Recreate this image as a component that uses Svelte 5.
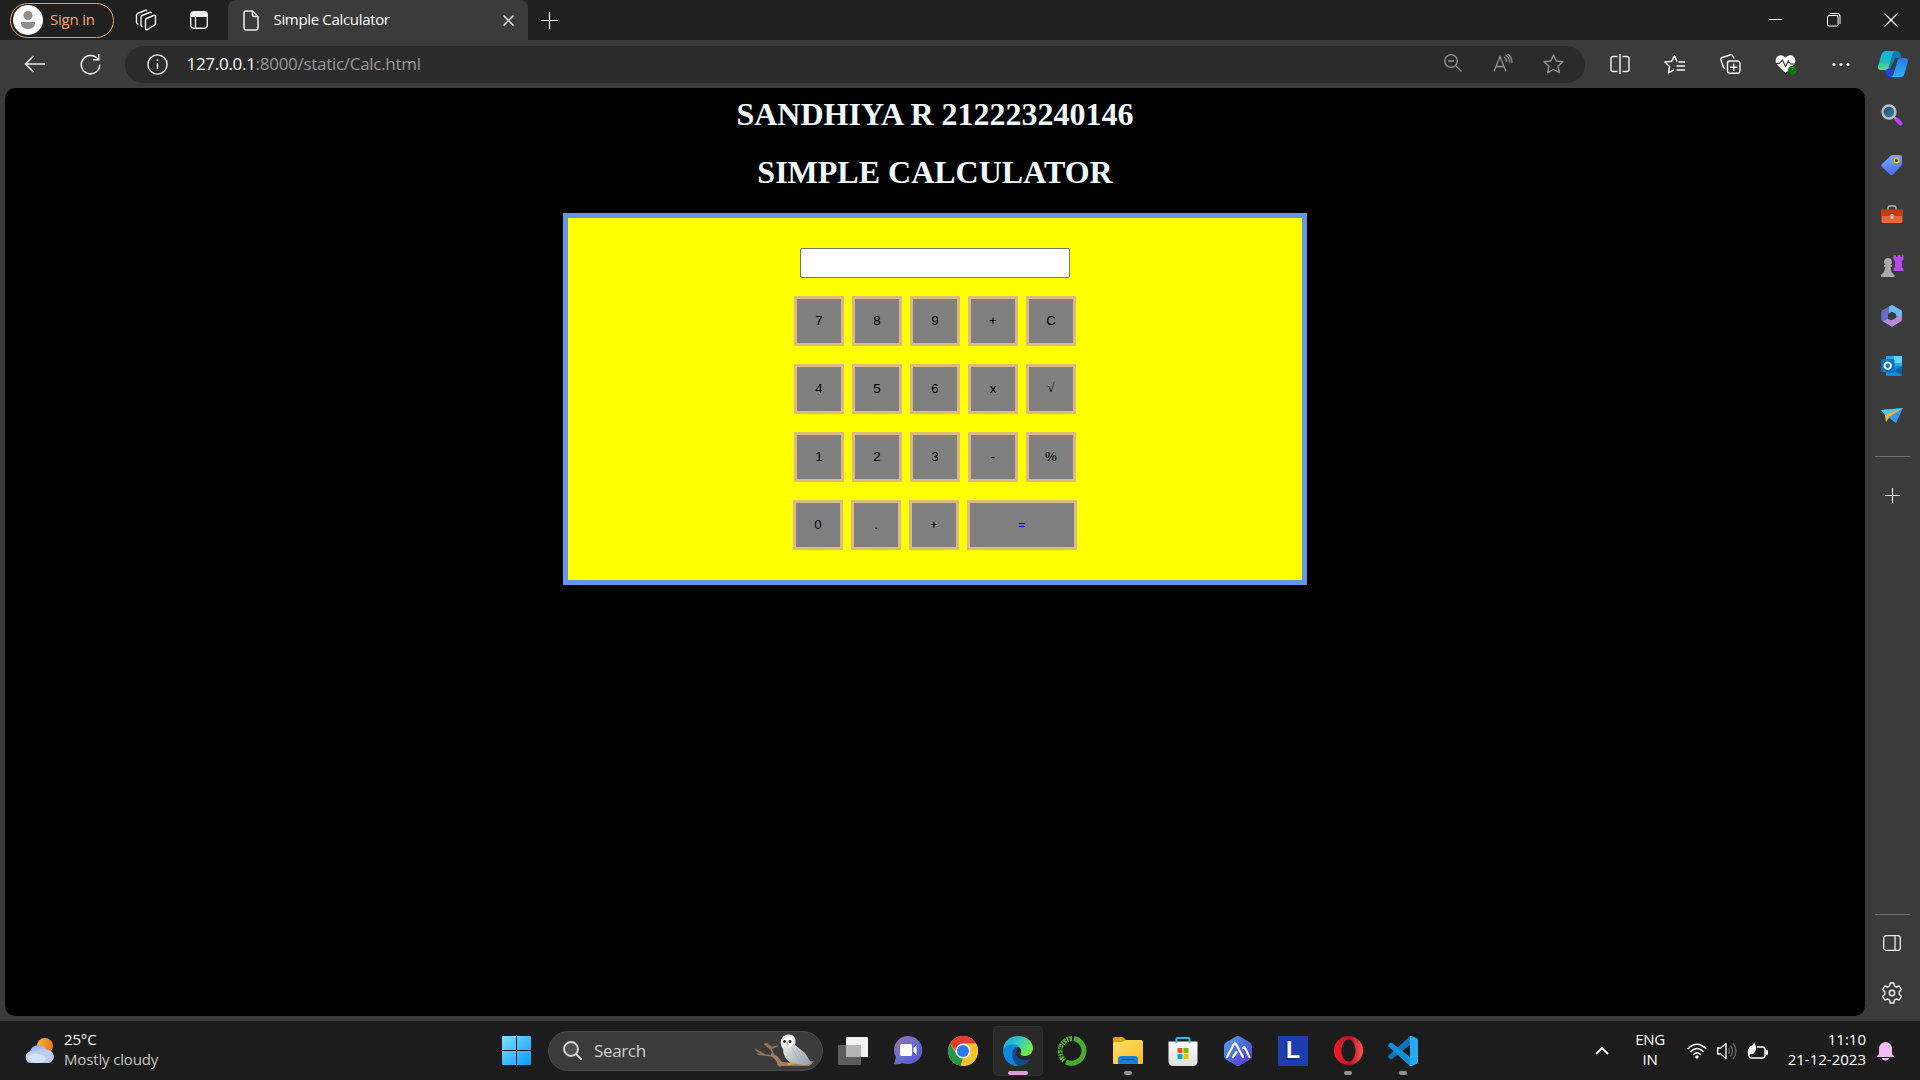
<script>
  const rows = [
    ['7', '8', '9', '+', 'C'],
    ['4', '5', '6', 'x', '√'],
    ['1', '2', '3', '-', '%'],
    ['0', '.', '+', '=']
  ];
</script>

<div class="screen">
  <header class="titlebar">
    <div class="signin">
      <svg width="30" height="30" viewBox="0 0 30 30"><circle cx="15" cy="15" r="15" fill="#fbfafc"/><circle cx="15" cy="10.5" r="4.5" fill="#8f8c8a"/><path d="M8 17h14v1.5a7 5.5 0 0 1-14 0z" fill="#8f8c8a"/></svg>
      <span>Sign in</span>
    </div>
    <svg class="spaces" width="22" height="22" viewBox="0 0 22 22" fill="none" stroke="#eee" stroke-width="1.4" stroke-linejoin="round"><path d="M11.500 9.500 18.500 6.500q2-.8 2 1.500v6.500q0 1-1 1.700l-7 4.300q-2 1-2-1.500v-7.500q0-1.500 1-2zM7.500 18Q6 17.500 6 16V8.500q0-1.500 1-2l7.500-3q1.500-.5 2 .8M3.500 15Q1.500 15 1.500 13V6.500q0-1.500 1-2l7.500-3q1.500-.5 2 .5"/></svg>
    <svg class="tabmenu" width="18" height="18" viewBox="0 0 18 18"><rect x=".7" y=".7" width="16.600" height="16.600" rx="3" fill="none" stroke="#eee" stroke-width="1.400"/><path d="M1 6V3.500Q1 1 3.500 1h11Q17 1 17 3.500V6z" fill="#eee"/><path d="M5.500 6v11" stroke="#eee" stroke-width="1.300"/></svg>
    <div class="tab">
      <svg width="16" height="21" viewBox="0 0 16 21" fill="none" stroke="#eee" stroke-width="1.500" stroke-linejoin="round"><path d="M3 1h6.500L15 6.500V18q0 2-2 2H3q-2 0-2-2V3q0-2 2-2zM9.500 1v4q0 1.500 1.500 1.500h4"/></svg>
      <span class="tabname">Simple Calculator</span>
      <svg class="tabclose" width="11" height="11" viewBox="0 0 11 11" stroke="#eee" stroke-width="1.500"><path d="m.5.5 10 10m0-10-10 10"/></svg>
    </div>
    <svg class="newtab" width="17" height="17" viewBox="0 0 17 17" stroke="#eee" stroke-width="1.200"><path d="M8.500 0v17M0 8.500h17"/></svg>
    <div class="wincontrols">
      <svg width="14" height="14" viewBox="0 0 14 14" stroke="#fff"><path d="M0 6.500h13"/></svg>
      <svg width="14" height="14" viewBox="0 0 14 14" fill="none" stroke="#fff"><rect x=".5" y="2.500" width="10.500" height="10.500" rx="1.500"/><path d="M3 .5h7.500q2.500 0 2.500 2.500v8"/></svg>
      <svg width="14" height="14" viewBox="0 0 14 14" stroke="#fff" stroke-width="1.100"><path d="m.5.5 13 13m0-13-13 13"/></svg>
    </div>
  </header>

  <div class="toolbar">
    <svg class="back" width="21" height="18" viewBox="0 0 21 18" fill="none" stroke="#eee" stroke-width="1.500"><path d="M21 9H1.500M9.500 1l-8 8 8 8"/></svg>
    <svg class="reload" width="21" height="21" viewBox="0 0 21 21" fill="none" stroke="#eee" stroke-width="1.500"><path d="M18 5.300A9.200 9.200 0 1 0 19.700 10.500M18.800 0v5.800H13"/></svg>
    <div class="address">
      <svg class="info" width="21" height="21" viewBox="0 0 21 21"><circle cx="10.500" cy="10.500" r="9.600" fill="none" stroke="#eee" stroke-width="1.400"/><path d="M10.500 9v6" stroke="#eee" stroke-width="1.500"/><circle cx="10.500" cy="6.300" r="1" fill="#eee"/></svg>
      <span class="url"><b>127.0.0.1</b>:8000/static/Calc.html</span>
      <div class="addrtools">
        <div><svg width="18" height="18" viewBox="0 0 18 18" fill="none" stroke="#929292" stroke-width="1.300"><circle cx="7" cy="7" r="6.300"/><path d="m11.500 11.500 6 6M4 7h6"/></svg></div>
        <div><svg width="20" height="18" viewBox="0 0 20 18" fill="none" stroke="#929292" stroke-width="1.300"><path d="m1 17.500 6-15 6 15M3 12.500h8M11 3q2.500 1.500 2.500 5M12.500 1q4 2 4 7.500M14.500 0Q19 2.500 19 9"/></svg></div>
        <div><svg width="21" height="20" viewBox="0 0 21 20" fill="none" stroke="#929292" stroke-width="1.400" stroke-linejoin="round"><path d="m10.500 1 2.800 6 6.600.7-4.900 4.500 1.400 6.500-5.900-3.200-5.900 3.200L6 12.200 1.100 7.700 7.700 7z"/></svg></div>
      </div>
    </div>
    <div class="extensions">
      <div><svg width="20" height="20" viewBox="0 0 20 20" fill="none" stroke="#f2f2f2" stroke-width="1.400"><path d="M7.500 2.500H3q-2 0-2 2v11q0 2 2 2h4.500M12.500 2.500H17q2 0 2 2v11q0 2-2 2h-4.500M10 0v20"/></svg></div>
      <div><svg width="21" height="20" viewBox="0 0 21 20" fill="none" stroke="#f2f2f2" stroke-width="1.400" stroke-linejoin="round"><path d="M13 7.500 10.500 1.500 7.700 7.200.9 8l4.700 4.500L4.400 19l5.400-3.200M12.500 12H21M12.500 16H21M14.500 8H21"/></svg></div>
      <div><svg width="21" height="20" viewBox="0 0 21 20" fill="none" stroke="#f2f2f2" stroke-width="1.400"><rect x="7.500" y="7" width="12.500" height="12.300" rx="2.500"/><path d="M13.700 9.500v7.500M10 13.200h7.500M5 14.500 3.500 13.500 1 6q-.5-1.700 1.200-2.500L10 1q2.500-.6 3.200 1.500l.8 2"/></svg></div>
      <div><svg width="22" height="21" viewBox="0 0 22 21"><path d="M10.500 19 2.200 10.800C-1 7.200.9 1.200 5.800 1.200c2 0 3.600.9 4.700 2.400C11.600 2.100 13.200 1.200 15.200 1.200c4.900 0 6.800 6 3.600 9.600z" fill="#fff"/><path d="M0 9.500h4.500L7.500 6l3 6.500 3-5.500 2 3H21" fill="none" stroke="#3b3b3b" stroke-width="1.200"/><circle cx="17.200" cy="16.300" r="4.400" fill="#107c10"/><path d="m15 16.400 1.500 1.500 2.900-3" fill="none" stroke="#075207"/></svg></div>
      <div><svg width="18" height="5" viewBox="0 0 18 5" fill="#eee"><circle cx="2" cy="2.500" r="1.600"/><circle cx="9" cy="2.500" r="1.600"/><circle cx="16" cy="2.500" r="1.600"/></svg></div>
      <div class="copilot"><svg width="30" height="27" viewBox="0 0 30 27"><defs><linearGradient id="ca" y2="1" x2="0"><stop stop-color="#15afe5"/><stop offset=".55" stop-color="#20bcb5"/><stop offset="1" stop-color="#65dd84"/></linearGradient><linearGradient id="cb" y2="1" x2="0"><stop stop-color="#2d73e6"/><stop offset="1" stop-color="#22b9fc"/></linearGradient></defs><path d="M10 0h9q2.500 0 3.400 3l1 4h-6L12 18H8l5-18z" fill="#087ebd"/><path d="M6 19h10l-1.500 7Q9.500 27 8.500 23z" fill="#2142d8"/><path d="M8 0h9q-2 1-2.600 3L10.700 16q-1 3-4 3H3.500q-4.300 0-3.200-4.500L3.500 3.500Q4.500 0 8 0z" fill="url(#ca)"/><path d="M22 7h4.500q4.300 0 3.200 4.500l-3.200 11Q25.500 26 22 26h-9q2-1 2.600-3L19.300 10q1-3 2.700-3z" fill="url(#cb)"/></svg></div>
    </div>
  </div>

  <div class="middle">
    <main class="page">
      <h1>SANDHIYA R 212223240146</h1>
      <h1>SIMPLE CALCULATOR</h1>
      <div class="calc">
        <div class="display"></div>
        {#each rows as row}
          <div class="keys">
            {#each row as key}
              <button class:equals={key === '='} class:root={key === '√'}>{key}</button>
            {/each}
          </div>
        {/each}
      </div>
    </main>

    <aside class="sidebar">
      <div class="cell"><svg width="22" height="22" viewBox="0 0 22 22"><defs><linearGradient id="lens" x2="1" y2="1"><stop stop-color="#1a465f"/><stop offset="1" stop-color="#378bb5"/></linearGradient></defs><path d="m15.500 15.500 4 4" stroke="#b744ef" stroke-width="4" stroke-linecap="round"/><path d="m12.500 12.500 2.500 2.500" stroke="#999" stroke-width="2"/><circle cx="8" cy="8" r="6.500" fill="url(#lens)" stroke="#bdbcb8" stroke-width="2.400"/></svg></div>
      <div class="cell"><svg width="22" height="22" viewBox="0 0 22 22"><defs><linearGradient id="tagc" x2=".3" y2="1"><stop stop-color="#78b4ff"/><stop offset="1" stop-color="#506cf4"/></linearGradient></defs><path d="M12 1h7q2 0 2 2v7q0 1-1 2l-8 8.500q-1.500 1.500-3 0L1 13q-1.500-1.500 0-3L9.500 2Q10.500 1 12 1z" fill="url(#tagc)"/><circle cx="15.500" cy="6.500" r="2.300" fill="#363018" stroke="#f3cc18" stroke-width="1.500"/></svg></div>
      <div class="cell"><svg width="24" height="20" viewBox="0 0 24 20"><path d="M8 6V3q0-2 2-2h4q2 0 2 2v3" fill="none" stroke="#b6b4b3" stroke-width="1.500"/><rect x="1.500" y="5" width="21" height="13" rx="1.500" fill="#eb653b"/><path d="M1 5.500Q1 4.500 2 4.500h20q1 0 1 1V11H1z" fill="#c63c0b"/><rect x="10.500" y="9" width="3" height="5" rx="1.300" fill="#c4c4c4"/></svg></div>
      <div class="cell"><svg width="24" height="24" viewBox="0 0 24 24"><path d="M13.500 1H16v2h1.500V1h3v2H22V1h1.500v4.500L22 7v6l1.500 2v2h-10v-2L15 13V7l-1.500-1.500z" fill="#b848f0"/><path d="M1 23v-2l3-3 1.500-5H4v-2h1.500a4 4 0 1 1 5 0H12v2h-1.500l1 5 3 3v2z" fill="#aaa"/></svg></div>
      <div class="cell"><svg width="22" height="22" viewBox="0 0 22 22"><path fill-rule="evenodd" d="m11 0 9 5.200q1 .6 1 2V14q0 1.500-1 2.200L11 21.800l-9.500-5.600Q.5 15.500.5 14V7Q.5 6 1.500 5.300zM11 6.500 7 9v5l3.500 1.500L15 13V9z" fill="#368fd4"/><path d="m11 0 9 5.200q1 .6 1 2v6L15 10V8.500L11 6.500 8 8V1.700z" fill="#68bdeb"/><path d="M8 1.700V8L7 9v5l-5 2Q.5 16 .5 14V7Q.5 6 1.500 5.300z" fill="#6869c8"/><path d="M2 16 7 14l3.500 1.500L15 13l6-3.500V14q0 1.500-1 2.200L11.500 21.600h-1z" fill="#b889df"/></svg></div>
      <div class="cell"><svg width="22" height="22" viewBox="0 0 22 22"><rect x="5" y="1" width="16" height="17" rx="1" fill="#28a8e8"/><path d="M13 1h8v7h-8z" fill="#62d4fb"/><path d="M5 11h16v9q0 1-1 1H6q-1 0-1-1z" fill="#158bd5"/><path d="M21 11v9l-8-4z" fill="#0b61aa"/><rect x="0" y="4" width="13.500" height="13.500" rx="1.500" fill="#0b71cc"/><circle cx="6.700" cy="10.700" r="3.200" fill="none" stroke="#fff" stroke-width="1.900"/></svg></div>
      <div class="cell"><svg width="22" height="18" viewBox="0 0 22 18"><path d="M0 3 22 1 15 16 8 11 5 15 4 8z" fill="#3598ed"/><path d="M0 3 22 1 4 8z" fill="#50c2fa"/><path d="M4 8 22 1 8 10 5 15z" fill="#f9b91a"/></svg></div>
      <div class="divider"></div>
      <svg class="add" width="15" height="15" viewBox="0 0 15 15" stroke="#ddd" stroke-width="1.200"><path d="M7.500 0v15M0 7.500h15"/></svg>
      <div class="divider lower"></div>
      <svg class="panel" width="18" height="16" viewBox="0 0 18 16" fill="none" stroke="#eee" stroke-width="1.300"><rect x=".7" y=".7" width="16.600" height="14.600" rx="2.500"/><path d="M12 1v14"/></svg>
      <svg class="gear" width="22" height="22" viewBox="0 0 22 22" fill="none" stroke="#eee" stroke-width="1.400" stroke-linejoin="round"><path d="M9.200 1h3.600l.7 3 1.700 1 3-1L20.400 7.500 18.200 9.800v2.400l2.200 2.300-2.200 3.500-3-1-1.700 1-.7 3H9.200l-.7-3-1.700-1-3 1L1.600 14.500l2.200-2.300V9.800L1.600 7.500 3.800 4l3 1 1.700-1z"/><circle cx="11" cy="11" r="2.700"/></svg>
    </aside>
  </div>

  <footer class="taskbar">
    <div class="weather">
      <svg width="31" height="26" viewBox="0 0 31 26"><defs><linearGradient id="cloud" x2="0" y2="1"><stop stop-color="#8db4f2"/><stop offset=".6" stop-color="#cedcf7"/><stop offset="1" stop-color="#a1bceb"/></linearGradient><linearGradient id="sun" x2="1"><stop stop-color="#f6b92a"/><stop offset="1" stop-color="#ef741b"/></linearGradient></defs><circle cx="21" cy="8" r="8" fill="url(#sun)"/><path d="M6 25a6 6 0 0 1 0-11.500A9 9 0 0 1 22.500 12a6.500 6.500 0 0 1 1.500 13z" fill="url(#cloud)"/><path d="M12 18a7.500 7.500 0 0 1 12-5.500A6.300 6.300 0 0 1 24 25H9z" fill="#b9cdf3"/><ellipse cx="13" cy="20.500" rx="9" ry="4.500" fill="#d7e3f9"/></svg>
      <div class="lines"><p>25°C</p><p class="dim">Mostly cloudy</p></div>
    </div>
    <svg class="start" width="29" height="29" viewBox="0 0 29 29"><defs><linearGradient id="win" gradientUnits="userSpaceOnUse" x2="29" y2="29"><stop stop-color="#7ee0fd"/><stop offset="1" stop-color="#079bff"/></linearGradient></defs><path fill="url(#win)" d="M1 0h13v14H0V1q0-1 1-1zM15 0h13q1 0 1 1v13H15zM0 15h14v14H1q-1 0-1-1zM15 15h14v13q0 1-1 1H15z"/></svg>
    <div class="search">
      <svg width="19" height="19" viewBox="0 0 19 19" fill="none" stroke="#d6d6d6" stroke-width="1.900" stroke-linecap="round"><circle cx="8" cy="8" r="7" fill="#505050"/><path d="m13 13 5 5"/></svg>
      <span>Search</span>
      <svg class="owl" width="60" height="34" viewBox="0 0 60 34"><defs><linearGradient id="feather" x2="1" y2="1"><stop stop-color="#fff"/><stop offset="1" stop-color="#8d9da5"/></linearGradient></defs><path d="m1 16 9 5 8 1 5 5 2 5M3 20l7 1M10 10l6 5 3 7M12 10l5 4 5-2" fill="none" stroke="#94755a" stroke-width="1.700" stroke-linecap="round"/><path d="m16 19 6 3 5 6 15 1 17-2-5 5H23q-1-6-7-10z" fill="#a18062"/><path d="M27 4q3-5 10-3 5 3 3 10l10 8 7 11-8 1-13-2Q28 24 28 15q-4-5-1-11z" fill="url(#feather)"/><path d="m37 14 8 14M42 15l7 14M46 18l7 12" stroke="#99a8ad" fill="none" stroke-width=".8"/><path d="M26 6q2-4 6-1 5-4 7 0 1 6-5 8-7 0-8-7z" fill="#fff"/><circle cx="29.500" cy="7.500" r="1.400" fill="#202020"/><circle cx="35" cy="7.500" r="1.400" fill="#202020"/><path d="m32 8 1 3" stroke="#d0a380" stroke-width="1.500"/><path d="m33 30 8-1" stroke="#e69b3f" stroke-width="2"/></svg>
    </div>
    <div class="apps">
      <div class="app"><svg width="30" height="28" viewBox="0 0 30 28"><rect y="8" width="23" height="20" rx="1" fill="#5d5d5d"/><rect x="8" width="22" height="20" rx="1" fill="#f2f2f2"/><path d="M8 8h15v12H8z" fill="#b5b5b5"/></svg></div>
      <div class="app"><svg width="29" height="29" viewBox="0 0 29 29"><defs><linearGradient id="chat" x2="1" y2="1"><stop stop-color="#aa68a8"/><stop offset=".5" stop-color="#686fce"/><stop offset="1" stop-color="#4d50c9"/></linearGradient></defs><path d="M14.500 0a14.500 14 0 1 1-6 27Q4 29 0 28l2-7A14 14 0 0 1 14.500 0z" fill="url(#chat)"/><rect x="6" y="8" width="12" height="12" rx="1.500" fill="#fff"/><path d="m19.500 12 3-3v10l-3-3z" fill="#fff"/></svg></div>
      <div class="app"><svg width="30" height="30" viewBox="0 0 30 30"><circle cx="15" cy="15" r="15" fill="#fbc02d"/><path d="M2 7.500A15 15 0 0 1 28 7.500H15L8 15z" fill="#e33b2e"/><path d="M2 7.500 9 19l6 3-2.500 7.800A15 15 0 0 1 2 7.500z" fill="#24964a"/><path d="m22 17-8.500 13a15 15 0 0 0 14.500-22.500H16z" fill="#fbc02d"/><circle cx="15" cy="15" r="7.500" fill="#fff"/><circle cx="15" cy="15" r="6" fill="#3079ed"/></svg></div>
      <div class="app active"><svg width="30" height="30" viewBox="0 0 30 30"><defs><linearGradient id="eg" x2="1" y2=".6"><stop stop-color="#1aa1e3"/><stop offset=".5" stop-color="#32c5c6"/><stop offset="1" stop-color="#76ef42"/></linearGradient><linearGradient id="eb" x2=".4" y2="1"><stop stop-color="#118bd9"/><stop offset="1" stop-color="#0786dc"/></linearGradient></defs><path d="M0 14C1 5 7 0 15 0c9 0 15 6 15 12 0 5-4 8-8 8-5 0-5-2-4-4 2-5-8-10-18-2z" fill="url(#eg)"/><path d="M0 14c3-6 13-7 16-3-5 0-6 5-4 9 2 5 8 7 14 4-3 4-8 6-12 6C6 30 0 23 0 14z" fill="url(#eb)"/><path d="M13 11c-6 4-5 15 3 19 5 0 9-3 11.500-7-6 2.500-16 0-14.500-8q1-3 3-4z" fill="#124b8b"/></svg><i></i></div>
      <div class="app"><svg width="30" height="30" viewBox="0 0 30 30" fill="none" stroke="#45af2a"><path d="M16 2.500A12.500 12.500 0 1 1 8 26" stroke-width="5"/><path d="M14 2.500A12.500 12.500 0 0 0 7 25" stroke-width="5" stroke-dasharray="3 .8 1.500 .8"/><path d="M12 2.500A12.500 12.500 0 0 0 5 22" stroke="#1c1c1c" stroke-width="1.200" stroke-dasharray="1.500 2"/></svg></div>
      <div class="app"><svg width="30" height="27" viewBox="0 0 30 27"><defs><linearGradient id="folder" x2="1" y2="1"><stop stop-color="#ffe06b"/><stop offset="1" stop-color="#fcba25"/></linearGradient></defs><path d="M0 10V1.500Q0 0 2 0h7q1 0 2 1l2 2v7z" fill="#e0a108"/><path d="M0 6q1-1 3-1h6l4-2h15q2 0 2 2v21q0 1-1 1H1q-1 0-1-1z" fill="url(#folder)"/><path d="M5 27v-5q0-3 3-3h14q3 0 3 3v5z" fill="#1482d5"/><path d="M9 22.500h12" stroke="#055597" stroke-width="1.200"/></svg><i></i></div>
      <div class="app"><svg width="30" height="30" viewBox="0 0 30 30"><defs><linearGradient id="store" x2="0" y2="1"><stop stop-color="#fff"/><stop offset="1" stop-color="#dedede"/></linearGradient></defs><path d="M.5 5.500h29V25q0 5-5 5h-19q-5 0-5-5z" fill="url(#store)"/><path d="M8.500 7V3q0-1 1-1h11q1 0 1 1v4" fill="none" stroke="#2bb9ed" stroke-width="2"/><path d="M9.500 12h5v5h-5z" fill="#f25022"/><path d="M15.500 12h5v5h-5z" fill="#7fba00"/><path d="M9.500 18h5v5h-5z" fill="#00a4ef"/><path d="M15.500 18h5v5h-5z" fill="#ffb900"/></svg></div>
      <div class="app"><svg width="28" height="30" viewBox="0 0 28 30"><defs><linearGradient id="hex" x2="1" y2="1"><stop stop-color="#55abed"/><stop offset=".5" stop-color="#4d68dc"/><stop offset="1" stop-color="#662cdc"/></linearGradient></defs><path d="m12 .6-10 6Q0 8 0 10v10q0 2 2 3.500l10 6q2 1 4 0l10-6q2-1.500 2-3.500V10q0-2-2-3.500l-10-6q-2-1-4 .1z" fill="url(#hex)"/><path d="m3 21 7-13q1-1.500 2 0l7 13M9 21l3.500-5M19 12l1.500-1 5 10" fill="none" stroke="#fff" stroke-width="2.200" stroke-linecap="round" stroke-linejoin="round"/></svg></div>
      <div class="app"><div class="ltile">L</div></div>
      <div class="app"><svg width="29" height="29" viewBox="0 0 29 29"><defs><linearGradient id="opera" x2="1"><stop stop-color="#fa1825"/><stop offset=".55" stop-color="#b91724"/><stop offset="1" stop-color="#ff5255"/></linearGradient></defs><path fill="url(#opera)" fill-rule="evenodd" d="M14.500 0a14.500 14.500 0 1 0 0 29 14.500 14.500 0 0 0 0-29zm0 3.500c4 0 7 5 7 11s-3 11-7 11-7-5-7-11 3-11 7-11z"/></svg><i></i></div>
      <div class="app"><svg width="30" height="30" viewBox="0 0 30 30"><path d="M22 0v9L4 23q-1 .7-2 0l-1.500-1.500q-1-1 0-2z" fill="#0874b9"/><path d="M22 30v-9L4 7Q3 6.300 2 7L.5 8.500q-1 1 0 2z" fill="#1391d6"/><path d="M22 0q1-.3 2 .1l5 2.400q1 .5 1 1.700v21.600q0 1.200-1 1.700l-5 2.400q-1 .4-2 .1z" fill="#29a9ef"/></svg><i></i></div>
    </div>
    <div class="tray">
      <svg class="chev" width="14" height="9" viewBox="0 0 14 9" fill="none" stroke="#fff" stroke-width="1.800"><path d="m1 8 6-6 6 6"/></svg>
      <div class="lang lines"><p>ENG</p><p>IN</p></div>
      <svg class="wifi" width="20" height="16" viewBox="0 0 20 16" fill="none" stroke="#fff" stroke-width="1.500"><path d="M.7 6q9.300-9.500 18.600 0M3.500 9q6.500-7 13 0M6.300 11.800q3.700-4 7.400 0"/><circle cx="10" cy="14" r="1.700" fill="#fff" stroke="none"/></svg>
      <svg class="vol" width="20" height="18" viewBox="0 0 20 18" fill="none" stroke="#fff" stroke-width="1.300"><path d="M.7 6v6h3L9 16.500v-15L3.700 6z" stroke-linejoin="round"/><path d="M11.500 6q2 3 0 6M13.500 3.500q4 5.500 0 11M16 1q6 8 0 16" stroke="#666"/></svg>
      <svg class="bat" width="21" height="18" viewBox="0 0 21 18"><path d="M10 5h5.500q2.500 0 2.500 2.500v6q0 2.500-2.500 2.500H4.500Q3 16 2 14.500" fill="none" stroke="#fff" stroke-width="1.400"/><path d="M18.500 8H20q1 0 1 1v3q0 1-1 1h-1.500zM1 11C0 7 3 4 6 3L7 0q3 5 1.500 8.500Q7 13 3.500 12L2 14.500 1 14z" fill="#fff"/></svg>
      <div class="clock lines"><p>11:10</p><p>21-12-2023</p></div>
      <svg class="bell" width="17" height="20" viewBox="0 0 17 20" fill="#f3bcf1"><path d="M2 13V7.500a6.500 6.500 0 0 1 13 0V13l2 2v1H0v-1zM5 17h7a3.500 2.500 0 0 1-7 0z"/></svg>
    </div>
  </footer>
</div>

<style>
  :global(body) { margin: 0; background: #000; overflow: hidden; }
  .screen { width: 1920px; height: 1080px; display: flex; flex-direction: column; background: #3b3b3b; font-family: "Open Sans", "Noto Sans", sans-serif; color: #fff; overflow: hidden; white-space: nowrap; }
  svg { display: block; flex: none; }
  p { margin: 0; }

  .titlebar { height: 40px; flex: none; display: flex; align-items: center; background: #202020; }
  .signin { box-sizing: border-box; margin-left: 10px; width: 104px; height: 35px; border: 1.500px solid #eaa06b; border-radius: 18px; display: flex; align-items: center; padding-left: 2px; gap: 7px; color: #f2a56d; font-size: 15px; letter-spacing: -.2px; }
  .signin span, .tabname, .url { padding-bottom: 2px; }
  .spaces { margin-left: 21px; }
  .tabmenu { margin-left: 33px; }
  .tab { box-sizing: border-box; margin-left: 20px; width: 300px; height: 40px; border-radius: 8px 8px 0 0; background: #3b3b3b; display: flex; align-items: center; padding: 0 14px 0 15px; }
  .tabname { margin-left: 14.500px; font-size: 15px; letter-spacing: -.33px; }
  .tabclose { margin-left: auto; }
  .newtab { margin-left: 13px; }
  .wincontrols { display: flex; gap: 43.500px; margin-left: auto; padding-right: 22px; }

  .toolbar { height: 48px; flex: none; display: flex; align-items: center; }
  .back { margin-left: 24px; }
  .reload { margin-left: 34.500px; }
  .address { margin-left: 24.500px; width: 1460px; height: 37px; border-radius: 19px; background: #2b2b2b; display: flex; align-items: center; }
  .info { margin-left: 22px; }
  .url { margin-left: 18.500px; font-size: 17px; letter-spacing: -.29px; color: #979797; }
  .url b { color: #fff; font-weight: 400; }
  .addrtools { margin-left: auto; display: flex; padding-right: 6px; }
  .addrtools div { width: 50.500px; display: flex; justify-content: center; }
  .extensions { display: flex; margin-left: 7px; align-items: center; }
  .extensions div { width: 55.300px; display: flex; justify-content: center; }
  .extensions .copilot { width: 50px; }

  .middle { height: 933px; flex: none; display: flex; }
  .page { margin-left: 5px; width: 1860px; height: 928px; border-radius: 10px; background: #000; display: flex; flex-direction: column; align-items: center; }
  h1 { margin: 8px 0 0; font: bold 32px/37px "Liberation Serif", serif; color: aliceblue; }
  h1 + h1 { margin-top: 21px; }
  .calc { box-sizing: border-box; width: 744px; height: 372px; margin-top: 22px; border: 5px solid cornflowerblue; background: #ff0; display: flex; flex-direction: column; align-items: center; gap: 18px; padding-top: 30px; }
  .display { box-sizing: border-box; width: 270px; height: 30px; border: 1px solid #767676; border-radius: 2px; background: #fff; }
  .keys { display: flex; gap: 8px; }
  button { box-sizing: border-box; width: 50px; height: 50px; padding: 0 0 2px; border: 3px solid burlywood; background: gray; color: #000; font: 13.333px "Liberation Sans", sans-serif; }
  button.equals { width: 110px; color: #0000e0; }
  button.root { font-family: "Liberation Serif", serif; }

  .sidebar { width: 54px; display: flex; flex-direction: column; align-items: center; }
  .cell { height: 50.200px; display: flex; align-items: center; }
  .cell:first-child { margin-top: 2px; }
  .divider { width: 35px; height: 1px; background: #727272; margin-top: 15px; }
  .add { margin-top: 31px; }
  .lower { margin-top: 411px; }
  .panel { margin-top: 20px; }
  .gear { margin-top: 31px; }

  .taskbar { height: 59px; flex: none; display: flex; align-items: center; background: #1c1c1c; }
  .lines { padding-bottom: 4px; }
  .weather { display: flex; align-items: center; margin-left: 24px; width: 478px; gap: 9px; font-size: 15px; line-height: 20px; letter-spacing: -.15px; }
  .dim { color: #c6c6c6; }
  .search { box-sizing: border-box; margin-left: 17px; width: 275px; height: 40px; border: 1px solid #4b4b4b; border-radius: 20px; background: #3b3b3b; display: flex; align-items: center; padding-left: 14px; padding-right: 7px; }
  .search span { margin-left: 12px; font-size: 17px; letter-spacing: -.35px; color: #d0d0d0; }
  .owl { margin-left: auto; }
  .apps { display: flex; gap: 5px; margin-left: 5px; }
  .app { position: relative; width: 50px; height: 50px; display: flex; align-items: center; justify-content: center; }
  .active { border-radius: 5px; background: #292929; box-shadow: inset 0 0 0 1px #303030; }
  .app i { position: absolute; bottom: 1px; left: 21px; width: 8px; height: 4px; border-radius: 2px; background: #929292; }
  .active i { left: 15px; width: 20px; background: #dc9bdf; }
  .ltile { width: 30px; height: 30px; background: #1d3eb0; font: bold 23px/29px "Liberation Sans", sans-serif; text-align: center; text-shadow: -2px 2px #173176; }
  .tray { display: flex; align-items: center; margin-left: auto; padding-right: 26.500px; font-size: 15px; line-height: 20px; letter-spacing: 0; }
  .lang { width: 40px; margin-left: 21.500px; text-align: center; letter-spacing: -.3px; }
  .wifi { margin-left: 17px; }
  .vol { margin-left: 10px; }
  .bat { margin-left: 10px; }
  .clock { width: 90px; margin-left: 8px; text-align: right; }
  .bell { margin-left: 10.500px; }
</style>
